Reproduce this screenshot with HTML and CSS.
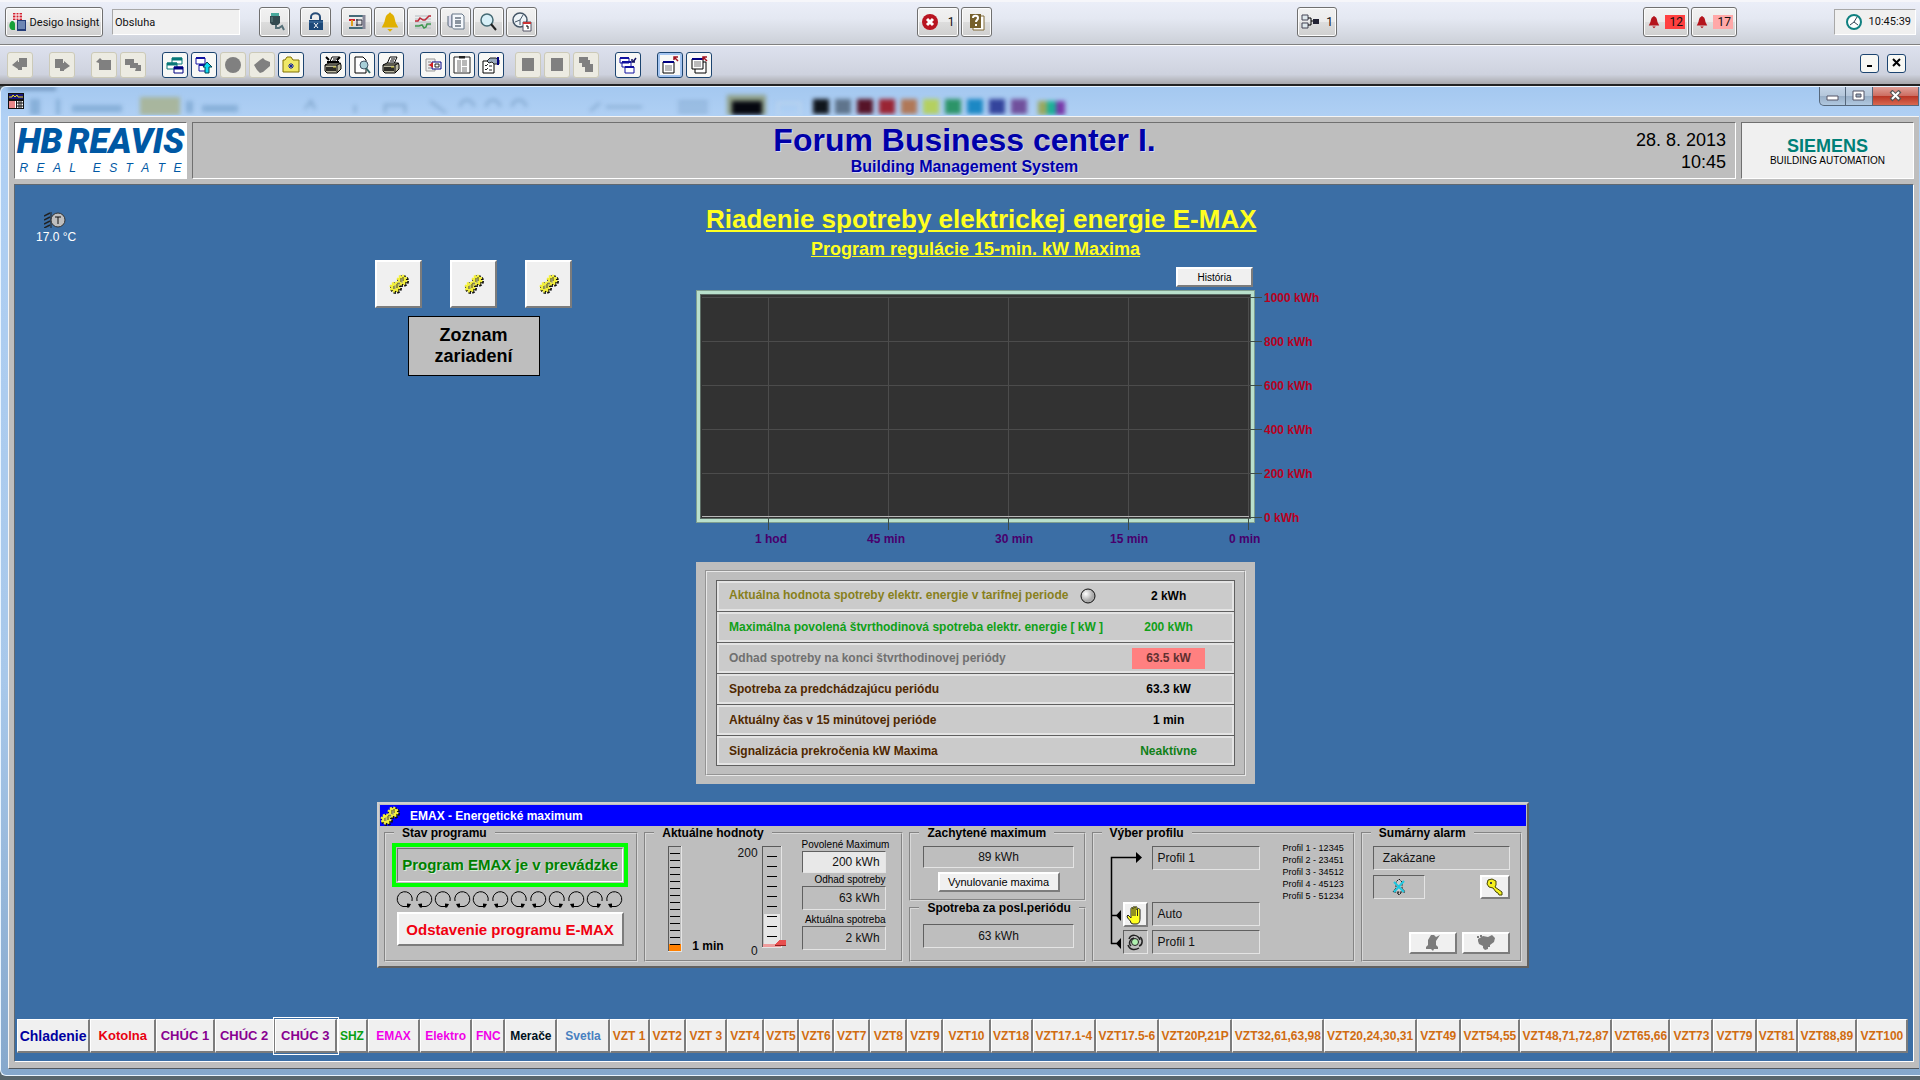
FILE: index.html
```html
<!DOCTYPE html>
<html lang="sk">
<head>
    <meta charset="UTF-8">
    <meta name="viewport" content="width=device-width, initial-scale=1.0">
    <title>Desigo Insight - E-MAX</title>
    <link rel="stylesheet" href="styles.css">
</head>
<body>
    <!-- Shared icon shapes -->
    <svg class="symbols" aria-hidden="true">
        <symbol id="gears" viewBox="0 0 20 20">
            <g transform="translate(1 1)">
                <circle cx="13" cy="6" r="4" fill="#111" stroke="#111" stroke-width="4" stroke-dasharray="2 1.100"/>
                <circle cx="6" cy="13" r="4" fill="#111" stroke="#111" stroke-width="4" stroke-dasharray="2 1.100"/>
            </g>
            <circle cx="13" cy="6" r="4" fill="#f4f03c" stroke="#f4f03c" stroke-width="3" stroke-dasharray="1.800 1.300"/>
            <circle cx="6" cy="13" r="4" fill="#f4f03c" stroke="#f4f03c" stroke-width="3" stroke-dasharray="1.800 1.300"/>
            <path d="M12 4v4M14 3v4M5 12v3M8 10v4" stroke="#333" fill="none"/>
            <path d="M10 8v4M13 5v4M6 11v4" stroke="#999" fill="none"/>
        </symbol>
        <symbol id="turn" viewBox="0 0 19 17">
            <path d="M16 10A7.500 7.500 0 1 0 7 15.500H13" fill="none" stroke="#000"/>
            <path d="M11 12.500l4 .5-2 3.500h-2z" fill="#000"/>
        </symbol>
        <symbol id="turn-back" viewBox="0 0 19 17">
            <path d="M2 10A7.500 7.500 0 1 1 11 15.500H5" fill="none" stroke="#000"/>
            <path d="M7 12.500l-4 .5 2 3.500h2z" fill="#000"/>
        </symbol>
        <symbol id="bell" viewBox="0 0 16 16">
            <path d="M8 1c-1 0-1 1-1 1-3 1-2 5-4 8l-1 2h12l-1-2c-2-3-1-7-4-8 0 0 0-1-1-1zM6 13h4l-2 2z"/>
        </symbol>
        <symbol id="printer" viewBox="0 0 18 18">
            <path d="M5 8l3-7h7l-3 7" fill="#fff" stroke="#000"/>
            <path d="M9 3h4M8 5h4" stroke="#000"/>
            <path d="M1 9l4-2h11l1 2v4l-4 4H3l-2-2z" fill="#b8b6a0" stroke="#000"/>
            <path d="M1 9h12l4-2M13 9v7" fill="none" stroke="#000"/>
            <path d="M2 12h10M2 14h10" stroke="#000" stroke-width="1.500"/>
            <path d="M9 11h3" stroke="#e0d840"/>
        </symbol>
    </svg>

    <header class="bar main-bar">
        <button type="button" class="app-button">
            <svg width="18" height="20" viewBox="0 0 18 20"><path d="M4 1h9v7H4z" fill="#d02030"/><path d="M4 3h9M4 6h9M7 1v7M10 1v7" stroke="#fff"/><path d="M1 11c2-4 5-1 5 1v6H3c-3-1-3-5-2-7z" fill="#18a038"/><path d="M8 8h9v11H8z" fill="#243c78"/><path d="M9 10h7M9 12h7M9 14h7M9 16h7" stroke="#b8d0f0"/></svg>
            Desigo Insight
        </button>
        <input type="text" class="user-box" value="Obsluha" aria-label="User" readonly>
        <button type="button" class="tool" aria-label="Logoff">
            <svg width="20" height="20" viewBox="0 0 20 20"><path d="M6 1h8v3H6z" fill="#48a89c"/><path d="M5 4h10v7l-2 2H7l-2-2z" fill="#344a50"/><path d="M7 5v5" stroke="#688"/><path d="M11 13v3h3l3-2 2 4" fill="none" stroke="#567078" stroke-width="2"/></svg>
        </button>
        <button type="button" class="tool lock" aria-label="Lock">
            <svg width="20" height="20" viewBox="0 0 20 20"><path d="M5 7V5c0-5 9-5 9 0v4" fill="none" stroke="#264c78" stroke-width="2"/><path d="M3 8h14v10H3z" fill="#1c4878"/><path d="M3 10h14" stroke="#4878a8"/><path d="M8 11l4 5M12 11l-4 5" stroke="#fff"/></svg>
        </button>
        <div class="tools">
            <button type="button" class="tool" aria-label="Plant viewer">
                <svg width="20" height="20" viewBox="0 0 20 20"><path d="M2 4h15M2 16h15" stroke="#456a78" stroke-width="2"/><path d="M2 8h6" stroke="#d02030" stroke-width="2"/><path d="M5 8v6" stroke="#e0a020" stroke-width="2"/><path d="M10 7v7M9 8h6M9 13h6M15 8v5" stroke="#223" fill="none"/><path d="M17 3v14" stroke="#889" stroke-width="3"/></svg>
            </button>
            <button type="button" class="tool" aria-label="Alarm viewer">
                <svg width="22" height="22" viewBox="0 0 16 16" fill="#e0b000"><use href="#bell"/></svg>
            </button>
            <button type="button" class="tool" aria-label="Trend viewer">
                <svg width="20" height="20" viewBox="0 0 20 20"><path d="M2 4h16M2 7h16M2 10h16M2 13h16M2 16h16" stroke="#b4bcc0"/><path d="M2 9h3l2-3 3 2h2l4-4h2" fill="none" stroke="#c02838" stroke-width="1.500"/><path d="M2 14h4l3-1 2 3 2-1 1-3h4" fill="none" stroke="#409850" stroke-width="1.500"/></svg>
            </button>
            <button type="button" class="tool" aria-label="Log viewer">
                <svg width="20" height="20" viewBox="0 0 20 20"><path d="M2 4v8c0 3 2 3 4 3V3" fill="#dde" stroke="#567"/><path d="M6 2h10l2 2v13H9c-3 0-3-2-3-4z" fill="#f4f8fc" stroke="#678"/><path d="M9 6h6M9 9h6M9 11h6M9 14h6" stroke="#234"/></svg>
            </button>
            <button type="button" class="tool" aria-label="Object viewer">
                <svg width="20" height="20" viewBox="0 0 20 20"><circle cx="8" cy="8" r="6" fill="#d8f0f8" stroke="#456a74" stroke-width="1.500"/><path d="M12 12l5 6" stroke="#222" stroke-width="2"/></svg>
            </button>
            <button type="button" class="tool" aria-label="Time scheduler">
                <svg width="20" height="20" viewBox="0 0 20 20"><circle cx="8" cy="8" r="7" fill="#eef4f8" stroke="#456" stroke-width="1.500"/><path d="M8 8l3-5M8 8l-5 2M8 8v5" stroke="#456"/><path d="M11 10h8v9h-8z" fill="#fff" stroke="#556"/><path d="M11 11h8" stroke="#c33" stroke-width="2"/><path d="M14 14h2v3" fill="none" stroke="#000"/></svg>
            </button>
        </div>
        <div class="tools errors">
            <button type="button" class="tool counter">
                <svg width="16" height="16" viewBox="0 0 16 16"><circle cx="8" cy="8" r="8" fill="#b81420"/><path d="M5 5l6 6M11 5l-6 6" stroke="#fff" stroke-width="3"/></svg>
                <span>1</span>
            </button>
            <button type="button" class="tool" aria-label="Help">
                <svg width="18" height="18" viewBox="0 0 18 18"><path d="M5 3h11v14H5z" fill="#fff" stroke="#806a38"/><path d="M2 1h11v14H2z" fill="#76602c"/><path d="M5 5c0-3 5-3 5 0 0 2-2 2-2 4M8 11v2" fill="none" stroke="#fff" stroke-width="2"/></svg>
            </button>
        </div>
        <div class="tools network">
            <button type="button" class="tool counter">
                <svg width="18" height="16" viewBox="0 0 18 16"><path d="M1 1h6v5H1zM1 9h6v5H1z" fill="#dfe8ec" stroke="#445"/><path d="M7 4h3v7H7M10 7h2" fill="none" stroke="#000"/><path d="M12 5h6v5h-6z" fill="#223"/></svg>
                <span>1</span>
            </button>
        </div>
        <div class="tools alarms">
            <button type="button" class="tool counter">
                <svg width="14" height="16" viewBox="0 0 16 16" fill="#b4141c"><use href="#bell"/></svg>
                <span class="count high">12</span>
            </button>
            <button type="button" class="tool counter">
                <svg width="14" height="16" viewBox="0 0 16 16" fill="#b4141c"><use href="#bell"/></svg>
                <span class="count low">17</span>
            </button>
        </div>
        <div class="clock">
            <svg width="18" height="18" viewBox="0 0 18 18"><circle cx="9" cy="9" r="7" fill="#fff" stroke="#108080" stroke-width="2"/><path d="M9 9l3-5M9 9l4 3M9 9l-4 3" stroke="#345"/></svg>
            <time>10:45:39</time>
        </div>
    </header>

    <nav class="bar view-bar">
        <button type="button" class="mini" disabled aria-label="Back"><svg width="18" height="18" viewBox="0 0 18 18"><path d="M1 9l6-5v2h1V2h8v9h-5v3H7v-1z"/></svg></button>
        <button type="button" class="mini" disabled aria-label="Forward"><svg width="18" height="18" viewBox="0 0 18 18"><path d="M17 10l-6-5v2h-1V3H2v9h5v3h4v-1z"/></svg></button>
        <div class="minis">
            <button type="button" class="mini" disabled aria-label="Up"><svg width="18" height="18" viewBox="0 0 18 18"><path d="M1 6l4-4 2 2h9v10H4V7z"/></svg></button>
            <button type="button" class="mini" disabled aria-label="Down"><svg width="18" height="18" viewBox="0 0 18 18"><path d="M1 3h9v4h4v2h3v6h-6l1-3H6V9H1z"/></svg></button>
        </div>
        <div class="minis">
            <button type="button" class="mini" aria-label="Windows"><svg width="18" height="18" viewBox="0 0 18 18"><path d="M6 2h10v6H6z" fill="#fff" stroke="#087878"/><path d="M6 3h10" stroke="#087878" stroke-width="3"/><path d="M1 7h10v6H1z" fill="#fff" stroke="#087878"/><path d="M1 8h10" stroke="#087878" stroke-width="3"/><path d="M8 11h9v6H8z" fill="#fff" stroke="#000080"/><path d="M8 12h9" stroke="#000080" stroke-width="3"/></svg></button>
            <button type="button" class="mini" aria-label="Page up"><svg width="18" height="18" viewBox="0 0 18 18"><path d="M1 2h9v6H1zM4 9h7v6H4z" fill="#fff" stroke="#1010a0"/><path d="M1 2h9M4 9h7" stroke="#1010a0" stroke-width="2"/><path d="M8 11l4-5 5 5h-3v6h-4v-6z" fill="#10d8f0" stroke="#004050"/></svg></button>
            <button type="button" class="mini" disabled aria-label="Stop"><svg width="18" height="18" viewBox="0 0 18 18"><circle cx="9" cy="9" r="8"/></svg></button>
            <button type="button" class="mini" disabled aria-label="Diamond"><svg width="18" height="18" viewBox="0 0 18 18"><path d="M1 9l6-5 3-2 2 2 5 2v4l-7 6-3 1-3-3z"/></svg></button>
            <button type="button" class="mini" aria-label="Favourites"><svg width="18" height="18" viewBox="0 0 18 18"><path d="M1 4h2l2-3h4l2 3h6v12H1z" fill="#f0e868" stroke="#807000"/><path d="M9 7v6M6 10h6M7 8l4 4M11 8l-4 4" stroke="#1020a0"/></svg></button>
        </div>
        <div class="minis">
            <button type="button" class="mini" aria-label="Print setup"><svg width="18" height="18"><use href="#printer"/><path d="M2 1l3 3M16 1l-3 3M3 6h12" stroke="#000" stroke-width="2"/></svg></button>
            <button type="button" class="mini" aria-label="Preview"><svg width="18" height="18" viewBox="0 0 18 18"><path d="M2 1h8l3 3v13H2z" fill="#fff" stroke="#000"/><circle cx="11" cy="9" r="4" fill="#a8d0d8" stroke="#456"/><path d="M13 12l4 5" stroke="#366" stroke-width="2"/></svg></button>
            <button type="button" class="mini" aria-label="Print"><svg width="18" height="18"><use href="#printer"/></svg></button>
        </div>
        <div class="minis">
            <button type="button" class="mini" aria-label="Pane left"><svg width="18" height="18" viewBox="0 0 18 18"><path d="M2 3h9v12H2z" fill="#eee" stroke="#999"/><path d="M4 6h3M4 9h2M4 12h3" stroke="#888"/><path d="M8 6h9v7H8z" fill="#fff" stroke="#000080"/><path d="M5 9l4-3v6z" fill="#d02020"/><path d="M11 8h4v3h-4z" fill="none" stroke="#222"/></svg></button>
            <button type="button" class="mini" aria-label="Split"><svg width="18" height="18" viewBox="0 0 18 18"><path d="M1 1h16v16H1z" fill="#fff" stroke="#222"/><path d="M4 4h4v12H4zM9 4h5v6H9zM9 11h5v5H9z" fill="#b8b8b8"/><path d="M6 1h6" stroke="#222" stroke-width="3"/></svg></button>
            <button type="button" class="mini" aria-label="Properties"><svg width="18" height="18" viewBox="0 0 18 18"><path d="M1 5h11v12H1z" fill="#fff" stroke="#000"/><path d="M3 9l1 1 2-2M3 13l1 1 2-2M7 10h3M7 14h3" fill="none" stroke="#222"/><path d="M5 5l3-3h6l3 2v4h-5l-2-2-3 1z" fill="#9ab" stroke="#222"/><path d="M16 1v8" stroke="#000080" stroke-width="2"/></svg></button>
        </div>
        <div class="minis layouts">
            <button type="button" class="mini" disabled aria-label="Tile"><svg width="18" height="18" viewBox="0 0 18 18"><path d="M3 2h12v13H3z"/></svg></button>
            <button type="button" class="mini" disabled aria-label="Tile all"><svg width="18" height="18" viewBox="0 0 18 18"><path d="M3 2h12v13H3z"/></svg></button>
            <button type="button" class="mini" disabled aria-label="Cascade"><svg width="18" height="18" viewBox="0 0 18 18"><path d="M2 1h9v3h2v4h3v8H8v-5H5V7H2z"/></svg></button>
        </div>
        <div class="minis">
            <button type="button" class="mini" aria-label="Arrange"><svg width="18" height="18" viewBox="0 0 18 18"><path d="M1 2h9v5H1zM3 6h9v5H3zM6 11h9v6H6z" fill="#fff" stroke="#1010a0"/><path d="M1 2h9M3 6h9M6 11h9" stroke="#1010a0" stroke-width="2"/><path d="M17 2l-3 4M13 3v3h3" fill="none" stroke="#101060" stroke-width="1.500"/></svg></button>
        </div>
        <div class="minis">
            <button type="button" class="mini selected" aria-label="Single window"><svg width="18" height="18" viewBox="0 0 18 18"><path d="M2 6h11v11H2z" fill="#fff" stroke="#000"/><path d="M2 6h11" stroke="#000080" stroke-width="2"/><path d="M4 10h7M4 12h7M4 14h7" stroke="#777"/><path d="M17 5l-4-4M13 4V1h4" fill="none" stroke="#a01020" stroke-width="1.500"/></svg></button>
            <button type="button" class="mini" aria-label="Several windows"><svg width="18" height="18" viewBox="0 0 18 18"><path d="M5 6h11v11H5z" fill="#fff" stroke="#000"/><path d="M2 3h11v10H2z" fill="#fff" stroke="#000"/><path d="M2 3h11" stroke="#000080" stroke-width="2"/><path d="M4 6h7M4 8h7M4 10h7" stroke="#777"/><path d="M17 5l-4-4M13 4V1h4" fill="none" stroke="#a01020" stroke-width="1.500"/></svg></button>
        </div>
        <div class="child-controls">
            <button type="button" aria-label="Minimize"><svg width="10" height="10"><path d="M2 8h5" stroke="#000" stroke-width="2"/></svg></button>
            <button type="button" aria-label="Close"><svg width="10" height="10"><path d="M1 1l7 7M8 1l-7 7" stroke="#000" stroke-width="2"/></svg></button>
        </div>
    </nav>

    <div class="window">
        <div class="title-bar">
            <!-- Aero glass: the program behind shows through -->
            <svg class="glass" height="28" width="1100">
                <path d="M8 0h48v3H8z" fill="#305880" opacity="0.6"/>
                <g fill="#6f9cc8" opacity="0.6"><path d="M30 12h10v16H30zM56 12h4v16h-4zM72 18h50v7H72zM202 18h36v7h-36zM186 14h7v12h-7z"/></g>
                <path d="M140 10h40v18h-40z" fill="#a8b088" opacity="0.8"/>
                <path d="M305 22l6-8 4 8M355 26V18M385 26v-8h20v8M430 14l16 12M460 20a7 7 0 0 1 14 0M486 20a7 7 0 0 1 14 0M512 20a7 7 0 0 1 14 0M590 24l10-8M606 20h36M678 15h30M678 20h30M678 25h30" stroke="#6088b0" stroke-width="2" fill="none" opacity="0.6"/>
                <path d="M727 8h39v20h-39z" fill="#90a088"/>
                <path d="M732 14h30v14h-30z" fill="#05070f"/>
                <path d="M778 16h22v12h-22z" fill="none" stroke="#bcd4ee" stroke-width="2"/>
                <path d="M813 12h16v15h-16z" fill="#10151c"/><path d="M835 12h16v15h-16z" fill="#5f748c"/>
                <path d="M857 12h16v15h-16z" fill="#561428"/><path d="M879 12h16v15h-16z" fill="#9a2434"/>
                <path d="M901 12h16v15h-16z" fill="#b07858"/><path d="M923 12h16v15h-16z" fill="#b4d060"/>
                <path d="M945 12h16v15h-16z" fill="#2c9468"/><path d="M967 12h16v15h-16z" fill="#1c88c4"/>
                <path d="M989 12h16v15h-16z" fill="#34449c"/><path d="M1011 12h16v15h-16z" fill="#70509c"/>
                <path d="M1038 14h9v14h-9z" fill="#98a860"/><path d="M1047 14h9v14h-9z" fill="#1cb098"/><path d="M1056 14h9v14h-9z" fill="#7838a8"/>
            </svg>
            <svg class="window-icon" width="16" height="16" viewBox="0 0 16 16"><path d="M0 0h16v16H0z" fill="#111"/><path d="M1 1h14v5H1z" fill="#16167c"/><path d="M1 4h3l1-2 2 2 2-2 1 2h5" stroke="#f0e020" fill="none"/><path d="M1 8h7v7H1z" fill="#fff"/><path d="M2 8v7M4 8v7M6 8v7" stroke="#d01010"/><path d="M9 8h6v7H9z" fill="#fff"/><path d="M9 10h6M9 13h6M11 8v7M13 8v7" stroke="#111"/></svg>
            <div class="window-controls">
                <button type="button" aria-label="Minimize"><svg width="14" height="12"><path d="M1 6h11v4H1z" fill="#fff" stroke="#556"/></svg></button>
                <button type="button" aria-label="Maximize"><svg width="14" height="12"><path d="M1 1h11v9H1z" fill="#fff" stroke="#556"/><path d="M4 4h5v3H4z" fill="#9ab" stroke="#556"/></svg></button>
                <button type="button" class="close" aria-label="Close"><svg width="14" height="12"><path d="M2 1l9 9M11 1l-9 9" stroke="#555" stroke-width="4"/><path d="M3 2l7 7M10 2l-7 7" stroke="#fff" stroke-width="2"/></svg></button>
            </div>
        </div>

        <div class="window-body">
            <div class="page-head">
                <div class="brand">
                    <span class="brand-name"><span>HB</span><span>REAVIS</span></span>
                    <span class="brand-sub"><i>R</i><i>E</i><i>A</i><i>L</i><i></i><i>E</i><i>S</i><i>T</i><i>A</i><i>T</i><i>E</i></span>
                </div>
                <div class="head-title">
                    <div class="head-names">
                        <p class="site">Forum Business center I.</p>
                        <p class="system">Building Management System</p>
                    </div>
                    <div class="head-date">28. 8. 2013<br>10:45</div>
                </div>
                <div class="siemens">
                    <span class="siemens-name">SIEMENS</span>
                    <span class="siemens-sub">BUILDING AUTOMATION</span>
                </div>
            </div>

            <main class="canvas">
                <div class="overview">
                    <div class="sensor">
                        <svg width="22" height="16" viewBox="0 0 22 16"><path d="M0 4l6-3M0 8l6-3M0 12l6-3M0 16l6-3" stroke="#222" stroke-width="1.500"/><path d="M7 0v16" stroke="#222"/><circle cx="14" cy="8" r="7" fill="#bebebe" stroke="#333"/><path d="M11 5h6M14 5v7" stroke="#111"/></svg>
                        <span>17.0 °C</span>
                    </div>

                    <div class="devices">
                        <div class="device-buttons">
                            <button type="button" class="raised" aria-label="Program 1"><svg width="20" height="20"><use href="#gears"/></svg></button>
                            <button type="button" class="raised" aria-label="Program 2"><svg width="20" height="20"><use href="#gears"/></svg></button>
                            <button type="button" class="raised" aria-label="Program 3"><svg width="20" height="20"><use href="#gears"/></svg></button>
                        </div>
                        <div class="device-list">Zoznam<br>zariadení</div>
                    </div>

                    <div class="trend">
                        <h1>Riadenie spotreby elektrickej energie E-MAX</h1>
                        <h2>Program regulácie 15-min. kW Maxima</h2>
                        <button type="button" class="raised history">História</button>

                        <div class="chart">
                            <svg class="plot" width="567" height="240" shape-rendering="crispEdges">
                                <path d="M0 0h559v233H0z" fill="#7f9f90"/>
                                <path d="M1 1h557v231H1z" fill="#b9e0cc"/>
                                <path d="M4 4h551v225H4z" fill="#5c6c64"/>
                                <path d="M5 5h549v223H5z" fill="#323232"/>
                                <path d="M6 7.500h548M6 51.500h548M6 95.500h548M6 139.500h548M6 183.500h548M72.500 7v222M192.500 7v222M312.500 7v222M432.500 7v222M552.500 7v222" stroke="#4c4c4c"/>
                                <path d="M6 226.500h547" stroke="#b8b8b8"/>
                                <path d="M554 7.500h12M554 51.500h12M554 95.500h12M554 139.500h12M554 183.500h12M554 227.500h12M72.500 229v11M192.500 229v11M312.500 229v11M432.500 229v11M552.500 229v11" stroke="#3c4c48"/>
                            </svg>
                            <div class="y-labels">
                                <span>1000 kWh</span>
                                <span>800 kWh</span>
                                <span>600 kWh</span>
                                <span>400 kWh</span>
                                <span>200 kWh</span>
                                <span>0 kWh</span>
                            </div>
                            <div class="x-labels">
                                <span>1 hod</span>
                                <span>45 min</span>
                                <span>30 min</span>
                                <span>15 min</span>
                                <span>0 min</span>
                            </div>
                        </div>

                        <div class="values">
                            <table>
                                <tr class="olive">
                                    <th>Aktuálna hodnota spotreby elektr. energie v tarifnej periode
                                        <svg width="16" height="16" viewBox="0 0 16 16"><defs><radialGradient id="ball" cx="0.35" cy="0.35"><stop offset="0" stop-color="#fff"/><stop offset="1" stop-color="#aaa"/></radialGradient></defs><circle cx="8" cy="8" r="7" fill="url(#ball)" stroke="#111"/></svg>
                                    </th>
                                    <td>2 kWh</td>
                                </tr>
                                <tr class="green">
                                    <th>Maximálna povolená štvrthodinová spotreba elektr. energie [ kW ]</th>
                                    <td>200 kWh</td>
                                </tr>
                                <tr class="grey">
                                    <th>Odhad spotreby na konci štvrthodinovej periódy</th>
                                    <td><span class="warn">63.5 kW</span></td>
                                </tr>
                                <tr>
                                    <th>Spotreba za predchádzajúcu periódu</th>
                                    <td>63.3 kW</td>
                                </tr>
                                <tr>
                                    <th>Aktuálny čas v 15 minútovej perióde</th>
                                    <td>1 min</td>
                                </tr>
                                <tr>
                                    <th>Signalizácia prekročenia kW Maxima</th>
                                    <td class="ok">Neaktívne</td>
                                </tr>
                            </table>
                        </div>
                    </div>

                    <section class="emax">
                        <div class="emax-title">
                            <svg width="20" height="20"><use href="#gears"/></svg>
                            EMAX - Energetické maximum
                        </div>
                        <div class="groups">
                            <fieldset class="state">
                                <legend>Stav programu</legend>
                                <div class="state-body">
                                    <div class="running"><span>Program EMAX je v prevádzke</span></div>
                                    <div class="turns">
                                        <svg width="19" height="17"><use href="#turn"/></svg><svg width="19" height="17"><use href="#turn-back"/></svg><svg width="19" height="17"><use href="#turn"/></svg><svg width="19" height="17"><use href="#turn-back"/></svg><svg width="19" height="17"><use href="#turn"/></svg><svg width="19" height="17"><use href="#turn-back"/></svg><svg width="19" height="17"><use href="#turn"/></svg><svg width="19" height="17"><use href="#turn-back"/></svg><svg width="19" height="17"><use href="#turn"/></svg><svg width="19" height="17"><use href="#turn-back"/></svg><svg width="19" height="17"><use href="#turn"/></svg><svg width="19" height="17"><use href="#turn-back"/></svg>
                                    </div>
                                    <button type="button" class="raised shutdown">Odstavenie programu E-MAX</button>
                                </div>
                            </fieldset>

                            <fieldset class="current">
                                <legend>Aktuálne hodnoty</legend>
                                <div class="current-body">
                                    <svg width="14" height="106" shape-rendering="crispEdges"><path d="M0 0h14v106H0z" fill="#e4e4e4"/><path d="M0 0h13v105H0z" fill="#5a5a5a"/><path d="M1 1h12v104H1z" fill="#bebebe"/><path d="M1 98h12v7H1z" fill="#ff8000"/><path d="M2 7.500h10M2 14.500h10M2 21.500h10M2 28.500h10M2 35.500h10M2 42.500h10M2 49.500h10M2 56.500h10M2 63.500h10M2 70.500h10M2 77.500h10M2 84.500h10M2 91.500h10M2 98.500h10" stroke="#000"/></svg>
                                    <b class="minute">1 min</b>
                                    <div class="scale"><span>200</span><span>0</span></div>
                                    <svg width="24" height="102" shape-rendering="crispEdges"><path d="M0 0h20v102H0z" fill="#e4e4e4"/><path d="M0 0h19v101H0z" fill="#5a5a5a"/><path d="M1 1h18v100H1z" fill="#bebebe"/><path d="M2 68h16v33H2z" fill="#e6e6e6"/><path d="M1 98h18v3H1z" fill="#ee9c9c"/><path d="M5 10.500h10M5 20.500h10M5 30.500h10M5 40.500h10M5 50.500h10M5 60.500h10M5 70.500h10M5 80.500h10M5 90.500h10" stroke="#000"/><path d="M12 99l5-5h7v5z" fill="#e85050"/><path d="M13 99h11v-4" stroke="#902020" fill="none"/></svg>
                                    <div class="readouts">
                                        <label for="allowed">Povolené Maximum</label>
                                        <input type="text" id="allowed" class="well editable" value="200 kWh">
                                        <label for="estimate">Odhad spotreby</label>
                                        <input type="text" id="estimate" class="well" value="63 kWh" readonly>
                                        <label for="actual">Aktuálna spotreba</label>
                                        <input type="text" id="actual" class="well" value="2 kWh" readonly>
                                    </div>
                                </div>
                            </fieldset>

                            <div class="captured">
                                <fieldset>
                                    <legend>Zachytené maximum</legend>
                                    <div class="captured-body">
                                        <output class="well short">89 kWh</output>
                                        <button type="button" class="raised reset">Vynulovanie maxima</button>
                                    </div>
                                </fieldset>
                                <fieldset class="last">
                                    <legend>Spotreba za posl.periódu</legend>
                                    <div class="captured-body">
                                        <output class="well">63 kWh</output>
                                    </div>
                                </fieldset>
                            </div>

                            <fieldset class="profile">
                                <legend>Výber profilu</legend>
                                <div class="profile-body">
                                    <svg class="wires" width="14" height="108"><path d="M2.500 98V11.500h26" fill="none" stroke="#000" stroke-width="1.500"/><path d="M2 69.500h6M2 97.500h6" stroke="#000" stroke-width="1.500"/><path d="M27 6v11l6-5.500zM12 64v11l-5-5.500zM12 92v11l-5-5.500z"/></svg>
                                    <output class="well active">Profil 1</output>
                                    <button type="button" class="raised hand" aria-label="Manual"><svg width="18" height="20" viewBox="0 0 18 20"><path d="M5 18c0-3-4-4-4-7l1-1 3 3V4c0-2 2-2 2 0V3c0-2 2-2 2 0 0-2 2-2 2 0v2c0-2 3-2 3 0v8c0 4-1 6-4 6H7z" fill="#ffff20" stroke="#222"/><path d="M7 4v7M9 3v8M11.500 4v7" stroke="#222"/></svg></button>
                                    <output class="well">Auto</output>
                                    <span class="well auto"><svg width="18" height="18" viewBox="0 0 18 18"><circle cx="9" cy="9" r="3.500" fill="#b0f0b0" stroke="#222"/><path d="M3 6c2-5 9-5 11 1M2 12c2 6 8 5 11 3M5 13c-3-3-1-7 3-8M13 13c4-1 4-7 1-9" fill="none" stroke="#222" stroke-width="1.500"/></svg></span>
                                    <output class="well">Profil 1</output>
                                    <ul>
                                        <li>Profil 1 - 12345</li>
                                        <li>Profil 2 - 23451</li>
                                        <li>Profil 3 - 34512</li>
                                        <li>Profil 4 - 45123</li>
                                        <li>Profil 5 - 51234</li>
                                    </ul>
                                </div>
                            </fieldset>

                            <fieldset class="summary">
                                <legend>Sumárny alarm</legend>
                                <div class="summary-body">
                                    <output class="well">Zakázane</output>
                                    <div class="summary-row">
                                        <span class="well bell"><svg width="16" height="18" viewBox="0 0 16 18"><path d="M8 1l3 3v6l3 4H2l3-4V4zM6 15h4l-2 2z" fill="#ccc" stroke="#111" stroke-dasharray="2 1"/><path d="M3 4l10 10M13 3L3 14" stroke="#20c8e0" stroke-width="2"/></svg></span>
                                        <button type="button" class="raised key" aria-label="Key"><svg width="18" height="18" viewBox="0 0 18 18"><path d="M1 6l1-4 4-1 4 2 0 4-1 2 7 5v3h-3l-1-2-2-1-3-4-4-1z" fill="#f4f020" stroke="#444400"/><path d="M4 4h2v2H4z" fill="#444"/></svg></button>
                                    </div>
                                    <div class="summary-buttons">
                                        <button type="button" class="raised" disabled aria-label="Acknowledge"><svg width="18" height="18" viewBox="0 0 18 18"><path d="M7 1h3l2 2 4-2-4 6v4l2 2v2h-4l-1 2-2-2H2v-2l2-2V6z" fill="#7c7c7c"/></svg></button>
                                        <button type="button" class="raised" disabled aria-label="Reset"><svg width="20" height="18" viewBox="0 0 20 18"><path d="M1 2h2v2H1zM4 1h2v2H4zM2 5l5-3 5 1 4-2 3 3-1 4-4 3v2h-2v2l-3 1-2-2v-2l-4-2-1-3z" fill="#7c7c7c"/></svg></button>
                                    </div>
                                </div>
                            </fieldset>
                        </div>
                    </section>
                </div>

                <nav class="tabs">
                    <button type="button" class="cooling">Chladenie</button>
                    <button type="button" class="boiler">Kotolna</button>
                    <button type="button" class="stairs">CHÚC 1</button>
                    <button type="button" class="stairs">CHÚC 2</button>
                    <button type="button" class="stairs focused">CHÚC 3</button>
                    <button type="button" class="shz">SHZ</button>
                    <button type="button" class="electric">EMAX</button>
                    <button type="button" class="electric">Elektro</button>
                    <button type="button" class="electric">FNC</button>
                    <button type="button" class="meters">Merače</button>
                    <button type="button" class="lights">Svetla</button>
                    <button type="button">VZT 1</button>
                    <button type="button">VZT2</button>
                    <button type="button">VZT 3</button>
                    <button type="button">VZT4</button>
                    <button type="button">VZT5</button>
                    <button type="button">VZT6</button>
                    <button type="button">VZT7</button>
                    <button type="button">VZT8</button>
                    <button type="button">VZT9</button>
                    <button type="button">VZT10</button>
                    <button type="button">VZT18</button>
                    <button type="button">VZT17.1-4</button>
                    <button type="button">VZT17.5-6</button>
                    <button type="button">VZT20P,21P</button>
                    <button type="button">VZT32,61,63,98</button>
                    <button type="button">VZT20,24,30,31</button>
                    <button type="button">VZT49</button>
                    <button type="button">VZT54,55</button>
                    <button type="button">VZT48,71,72,87</button>
                    <button type="button">VZT65,66</button>
                    <button type="button">VZT73</button>
                    <button type="button">VZT79</button>
                    <button type="button">VZT81</button>
                    <button type="button">VZT88,89</button>
                    <button type="button">VZT100</button>
                </nav>
            </main>
        </div>
    </div>
</body>
</html>
```
FILE: styles.css
```css
* {
    box-sizing: border-box;
}

body {
    margin: 0;
    min-height: 100vh;
    display: flex;
    flex-direction: column;
    font-family: "Liberation Sans", Arial, sans-serif;
    font-size: 12px;
    line-height: 14px;
    color: #111;
    background-color: #59666c;
    padding-bottom: 4px;
}

h1, h2, p, ul {
    margin: 0;
    padding: 0;
}

button, input {
    font-family: inherit;
    font-size: 12px;
    color: inherit;
    padding: 0;
}

svg {
    display: block;
    flex: none;
}

.symbols {
    position: absolute;
    width: 0;
    height: 0;
}

/* Toolbars */
.bar {
    display: flex;
    align-items: center;
    border-bottom: 1px solid #808080;
}

.main-bar {
    height: 45px;
    padding: 5px 4px 8px 5px;
    align-items: flex-start;
    border-top: 2px solid #f6f6fa;
    font-family: Roboto, "Open Sans", sans-serif;
    background: linear-gradient(#ebeef8, #e4e8f2 40%, #ccd0d8);
}

.app-button, .tool {
    height: 30px;
    display: flex;
    align-items: center;
    justify-content: center;
    border: 1px solid #707070;
    border-radius: 3px;
    box-shadow: inset 0 0 0 1px #fcfcfc;
    background: linear-gradient(#f2f2f2, #ebebeb 50%, #dddddd 50%, #cfcfcf);
}

.app-button {
    width: 98px;
    gap: 3px;
    white-space: nowrap;
    font-size: 11px;
}

.user-box {
    width: 128px;
    height: 26px;
    margin: 2px 19px 0 9px;
    padding-left: 2px;
    border: 1px solid #a8a8a8;
    border-right-color: #fff;
    border-bottom-color: #fff;
    background-color: #f0f0f0;
    font-size: 11px;
}

.tool {
    width: 31px;
}

.lock {
    margin: 0 10px;
}

.tools {
    display: flex;
    gap: 2px;
}

.counter {
    width: 42px;
    gap: 10px;
}

.errors {
    margin-left: auto;
}

.network {
    margin-left: 305px;
}

.network .counter {
    width: 40px;
    gap: 7px;
}

.alarms {
    margin-left: 306px;
}

.alarms .counter {
    width: 46px;
    gap: 4px;
}

.count {
    width: 20px;
    line-height: 14px;
    text-align: right;
    padding-right: 2px;
}

.high {
    background-color: #ff4040;
}

.low {
    background-color: #ffa8a8;
}

.clock {
    margin: 2px 0 0 97px;
    height: 26px;
    width: 82px;
    display: flex;
    align-items: center;
    justify-content: flex-end;
    gap: 6px;
    padding-right: 4px;
    border: 1px solid #a8a8a8;
    border-right-color: #fff;
    border-bottom-color: #fff;
    background-color: #f0f0f0;
    font-size: 11px;
}

.view-bar {
    height: 41px;
    padding: 0 14px 0 7px;
    gap: 16px;
    border-top: 1px solid #fff;
    border-bottom: 2px solid #222;
    background: linear-gradient(#dde1ee, #ced2de 75%, #a8a8ac);
}

.minis {
    display: flex;
    gap: 3px;
}

.layouts {
    margin-left: -5px;
}

.mini {
    width: 26px;
    height: 26px;
    display: flex;
    align-items: center;
    justify-content: center;
    border: 1px solid #1c4470;
    border-radius: 3px;
    background-color: #f8f8f6;
}

.mini:disabled {
    border-color: #cccab8;
    background-color: #ecebe2;
    fill: #808080;
}

.selected {
    box-shadow: inset 0 0 0 2px #a4c4f0;
}

.child-controls {
    display: flex;
    gap: 8px;
    margin-left: auto;
    margin-bottom: 4px;
}

.child-controls button {
    width: 19px;
    height: 19px;
    display: flex;
    align-items: center;
    justify-content: center;
    border: 1px solid #1c4470;
    border-radius: 3px;
    background-color: #f8f8f4;
}

/* Window */
.window {
    flex: 1;
    display: flex;
    flex-direction: column;
    padding: 0 1px 6px 7px;
    border: 1px solid #e8f4ff;
    border-radius: 6px 0 0 6px;
    border-right: none;
    background: linear-gradient(#a4c8f0, #b0d0f4 30px, #a8c8ea 60%, #86a8cc);
}

.title-bar {
    position: relative;
    height: 29px;
    flex: none;
    display: flex;
    justify-content: space-between;
}

.glass {
    position: absolute;
    left: -8px;
    top: 0;
    filter: blur(2px);
    clip-path: inset(0);
}

.window-icon {
    position: relative;
    margin-top: 6px;
}

.window-controls {
    display: flex;
}

.window-controls button {
    width: 27px;
    height: 19px;
    display: flex;
    align-items: center;
    justify-content: center;
    border: 1px solid #56687c;
    border-top: none;
    border-left-width: 0;
    background: linear-gradient(#c4d4e6, #b4c6da 50%, #98aec6 50%, #b0c8e0);
}

.window-controls button:first-child {
    border-left-width: 1px;
    border-radius: 0 0 0 5px;
}

.window-controls .close {
    width: 46px;
    background: linear-gradient(#e0a098, #cc6c60 50%, #b83424 50%, #d86850);
}

.window-body {
    flex: 1;
    display: flex;
    flex-direction: column;
    gap: 5px;
    padding: 5px 5px 6px;
    border: 1px solid #505860;
    border-left-color: #f4f4f4;
    border-top-color: #f4f4f4;
    border-right: none;
    background-color: #bebebe;
}

.page-head {
    display: flex;
    gap: 5px;
    height: 57px;
}

.brand, .head-title, .siemens {
    border: 1px solid #707070;
    border-right-color: #fff;
    border-bottom-color: #fff;
}

.brand {
    width: 173px;
    display: flex;
    flex-direction: column;
    align-items: center;
    background-color: #fff;
    color: #0058a4;
    font-style: italic;
}

.brand-name {
    display: flex;
    gap: 5px;
    font-family: Roboto, sans-serif;
    font-size: 35px;
    line-height: 38px;
    font-weight: 900;
    white-space: nowrap;
}

.brand-sub {
    display: flex;
    justify-content: space-between;
    width: 162px;
    font-size: 12px;
    line-height: 14px;
}

.head-title {
    flex: 1;
    display: grid;
    grid-template-columns: 1fr 200px;
    padding-left: 210px;
    padding-right: 9px;
    text-align: center;
    color: #0000a8;
    font-weight: bold;
    text-shadow: 1px 1px #d8d8f8;
}

.site {
    font-size: 32px;
    line-height: 35px;
}

.system {
    font-size: 16px;
    line-height: 18px;
}

.head-date {
    padding-top: 6px;
    text-align: right;
    font-size: 18px;
    line-height: 22px;
    font-weight: normal;
    color: #000;
    text-shadow: none;
}

.siemens {
    width: 173px;
    display: flex;
    flex-direction: column;
    align-items: center;
    justify-content: center;
    padding-top: 4px;
    background-color: #f0f0f0;
}

.siemens-name {
    font-size: 18px;
    line-height: 16px;
    font-weight: bold;
    color: #008078;
}

.siemens-sub {
    font-size: 10px;
    color: #000;
}

/* Canvas */
.canvas {
    flex: 1;
    display: flex;
    flex-direction: column;
    justify-content: space-between;
    border: 1px solid #606870;
    border-right-color: #fff;
    border-bottom-color: #fff;
    background-color: #3b6ea5;
}

.overview {
    display: grid;
    grid-template-columns: 360fr 321fr 1217fr;
    padding-top: 19px;
}

.sensor {
    display: flex;
    flex-direction: column;
    gap: 2px;
    padding: 8px 0 0 21px;
    color: #fff;
}

.sensor svg {
    margin-left: 8px;
}

.raised {
    display: flex;
    align-items: center;
    justify-content: center;
    border: 2px solid #fff;
    border-right-color: #7c7c7c;
    border-bottom-color: #7c7c7c;
    background-color: #f0f0f0;
    color: #000;
}

.devices {
    display: flex;
    flex-direction: column;
    align-items: center;
    gap: 8px;
    width: 197px;
    padding-top: 56px;
}

.device-buttons {
    display: flex;
    gap: 28px;
}

.device-buttons button {
    width: 47px;
    height: 48px;
}

.device-list {
    width: 132px;
    padding: 8px 0;
    border: 1px solid #000;
    background-color: #bebebe;
    color: #000;
    text-align: center;
    font-size: 18px;
    line-height: 21px;
    font-weight: bold;
}

.trend {
    width: 559px;
}

h1, h2 {
    text-align: center;
    white-space: nowrap;
    text-decoration: underline;
    color: #ffff20;
}

h1 {
    padding-left: 10px;
    font-size: 26px;
    line-height: 30px;
}

h2 {
    margin-top: 4px;
    font-size: 18px;
    line-height: 22px;
}

.history {
    width: 77px;
    height: 20px;
    margin: 7px 2px 3px auto;
    font-size: 10px;
}

.chart {
    display: grid;
    grid-template-columns: 567px 60px;
    column-gap: 1px;
    line-height: 16px;
    font-weight: bold;
}

.y-labels {
    display: flex;
    flex-direction: column;
    gap: 28px;
    color: #b80020;
    height: 240px;
    white-space: nowrap;
}

.x-labels {
    grid-column: span 2;
    display: grid;
    grid-template-columns: 112px 128px 115px 119px 60px;
    padding-left: 59px;
    padding-top: 1px;
    color: #48006c;
}

.values {
    margin-top: 15px;
    padding: 8px 9px;
    background-color: #bebebe;
}

.values table {
    width: 100%;
    border: 2px groove #e8e8e8;
    padding: 8px 9px;
    border-spacing: 0;
    font-weight: bold;
    color: #000;
}

.values th, .values td {
    height: 31px;
    padding: 0;
    border-top: 1px solid #606060;
    background-color: #cbcbcb;
}

.values tr:last-child > * {
    border-bottom: 1px solid #606060;
}

.values th {
    padding-left: 12px;
    border-left: 1px solid #606060;
    box-shadow: inset 2px 2px #e4e4e4, inset 0 -2px #e4e4e4;
    text-align: left;
    white-space: nowrap;
    color: #502800;
}

.values td {
    width: 136px;
    border-right: 1px solid #606060;
    box-shadow: inset -2px 2px #e4e4e4, inset 0 -2px #e4e4e4;
    text-align: center;
}

.values th svg {
    display: inline-block;
    vertical-align: middle;
    margin-left: 8px;
}

.values .olive th {
    color: #88801c;
}

.values .green > * {
    color: #10a018;
}

.values .grey th {
    color: #707070;
}

.values .ok {
    color: #108018;
}

.warn {
    display: inline-block;
    width: 73px;
    line-height: 21px;
    background-color: #ff8080;
    color: #603030;
}

/* EMAX panel */
.emax {
    grid-column: 2 / 4;
    width: 1152px;
    margin-top: 18px;
    margin-left: 2px;
    border: 2px solid #d0d0d0;
    border-right-color: #606060;
    border-bottom-color: #606060;
    background-color: #bebebe;
}

.emax-title {
    display: flex;
    align-items: center;
    gap: 10px;
    height: 21px;
    margin: 1px 1px 0;
    background-color: #0000ff;
    color: #fff;
    font-weight: bold;
}

.groups {
    display: grid;
    grid-template-columns: 254fr 259fr 176fr 263fr 161fr;
    gap: 6px;
    padding: 0 5px 4px;
}

fieldset {
    margin: 0;
    min-width: 0;
    padding: 0;
    border: 2px groove #d8d8d8;
}

legend {
    margin-left: 8px;
    padding: 0 8px;
    line-height: 14px;
    font-weight: bold;
    color: #000;
}

.well {
    display: flex;
    align-items: center;
    height: 24px;
    padding: 0 5px;
    border: 1px solid #606060;
    border-right-color: #e4e4e4;
    border-bottom-color: #e4e4e4;
    background-color: #bebebe;
}

.state-body {
    padding: 3px 8px 0 6px;
    height: 120px;
}

.running {
    height: 44px;
    padding: 1px;
    border: 4px solid #00ff00;
}

.running span {
    display: flex;
    align-items: center;
    justify-content: center;
    height: 100%;
    border: 1px solid #707070;
    border-right-color: #fff;
    border-bottom-color: #fff;
    font-size: 15px;
    font-weight: bold;
    white-space: nowrap;
    color: #008000;
    text-shadow: 1px 1px #d8ecd8;
}

.turns {
    display: flex;
    justify-content: center;
    margin: 4px 0;
}

.shutdown {
    width: 227px;
    height: 34px;
    margin: 0 auto;
    font-size: 15px;
    font-weight: bold;
    color: #f00010;
}

.current-body {
    display: flex;
    padding: 6px 0 0 22px;
}

.minute {
    align-self: flex-end;
    margin: 0 12px 5px 10px;
    color: #000;
    white-space: nowrap;
}

.scale {
    display: flex;
    flex-direction: column;
    justify-content: space-between;
    width: 22px;
    height: 112px;
    margin-right: 4px;
    text-align: right;
}

.readouts {
    display: flex;
    flex-direction: column;
    width: 84px;
    margin: -6px 0 0 16px;
}

.readouts label {
    margin-bottom: 1px;
    text-align: right;
    white-space: nowrap;
    font-size: 10px;
    line-height: 10px;
    color: #000;
}

.readouts input {
    width: 84px;
    margin-bottom: 5px;
    text-align: right;
}

.readouts .editable {
    height: 22px;
    margin-bottom: 2px;
    background-color: #e8e8e8;
}

.captured {
    display: grid;
    grid-template-rows: 75px 61px;
}

.captured-body {
    display: flex;
    flex-direction: column;
    align-items: center;
    gap: 4px;
    padding: 6px 10px 0 12px;
}

.captured .well {
    width: 100%;
    justify-content: center;
}

.captured .short {
    height: 22px;
}

.captured .last .captured-body {
    padding-top: 9px;
}

.reset {
    width: 122px;
    height: 20px;
    font-size: 11px;
}

.profile-body {
    display: grid;
    grid-template-columns: 14px 25px 108px 1fr;
    grid-template-rows: 52px 24px 24px;
    row-gap: 4px;
    padding: 6px 0 0 15px;
}

.profile-body .well {
    height: 24px;
    margin-left: 4px;
    margin-right: -4px;
}

.profile-body .wires {
    grid-row: 1 / 4;
    overflow: visible;
}

.profile-body .active {
    grid-column: 3;
}

.profile-body .hand {
    grid-area: 2 / 2;
    width: 25px;
    height: 25px;
}

.profile-body .auto {
    width: 25px;
    margin: 0;
    padding: 0;
    justify-content: center;
}

.profile-body ul {
    grid-area: 1 / 4 / 4 / 5;
    margin-top: -4px;
    padding-left: 27px;
    list-style: none;
    font-size: 9px;
    line-height: 12px;
    color: #000;
    white-space: nowrap;
}

.summary-body {
    padding: 6px 10px 0;
}

.summary-row {
    display: flex;
    justify-content: space-between;
    margin: 5px 0 33px;
}

.bell {
    width: 52px;
    justify-content: center;
}

.key {
    width: 30px;
    height: 24px;
}

.summary-buttons {
    display: flex;
    justify-content: flex-end;
    gap: 5px;
}

.summary-buttons button {
    width: 48px;
    height: 22px;
}

.summary-body > .well {
    padding-left: 9px;
}

/* Navigation tabs */
.tabs {
    display: grid;
    grid-template-columns:
        73fr 66fr 58fr 60fr 62fr 31fr 52fr 52fr 33fr 52fr 52fr
        40fr 36fr 41fr 37fr 35fr 35fr 36fr 37fr 36fr 47fr 42fr
        63fr 63fr 73fr 92fr 92fr 44fr 59fr 92fr 58fr 43fr 43fr 41fr 59fr 51fr;
    padding: 0 5px 8px 2px;
}

.tabs button {
    height: 34px;
    min-width: 0;
    white-space: nowrap;
    border: 1px solid #fff;
    border-right: 2px solid #7c7c7c;
    border-bottom: 2px solid #7c7c7c;
    background-color: #f0f0f0;
    font-weight: bold;
    color: #d06c10;
}

.tabs .cooling {
    font-size: 14px;
    color: #0000a0;
}

.tabs .boiler {
    font-size: 13px;
    color: #e80010;
}

.tabs .stairs {
    font-size: 13px;
    color: #880090;
}

.tabs .shz {
    color: #08a010;
}

.tabs .electric {
    color: #f000e8;
}

.tabs .meters {
    color: #001020;
}

.tabs .lights {
    color: #4880c0;
}

.tabs .focused {
    outline: 1px solid #fff;
    outline-offset: 1px;
    z-index: 1;
}
```
